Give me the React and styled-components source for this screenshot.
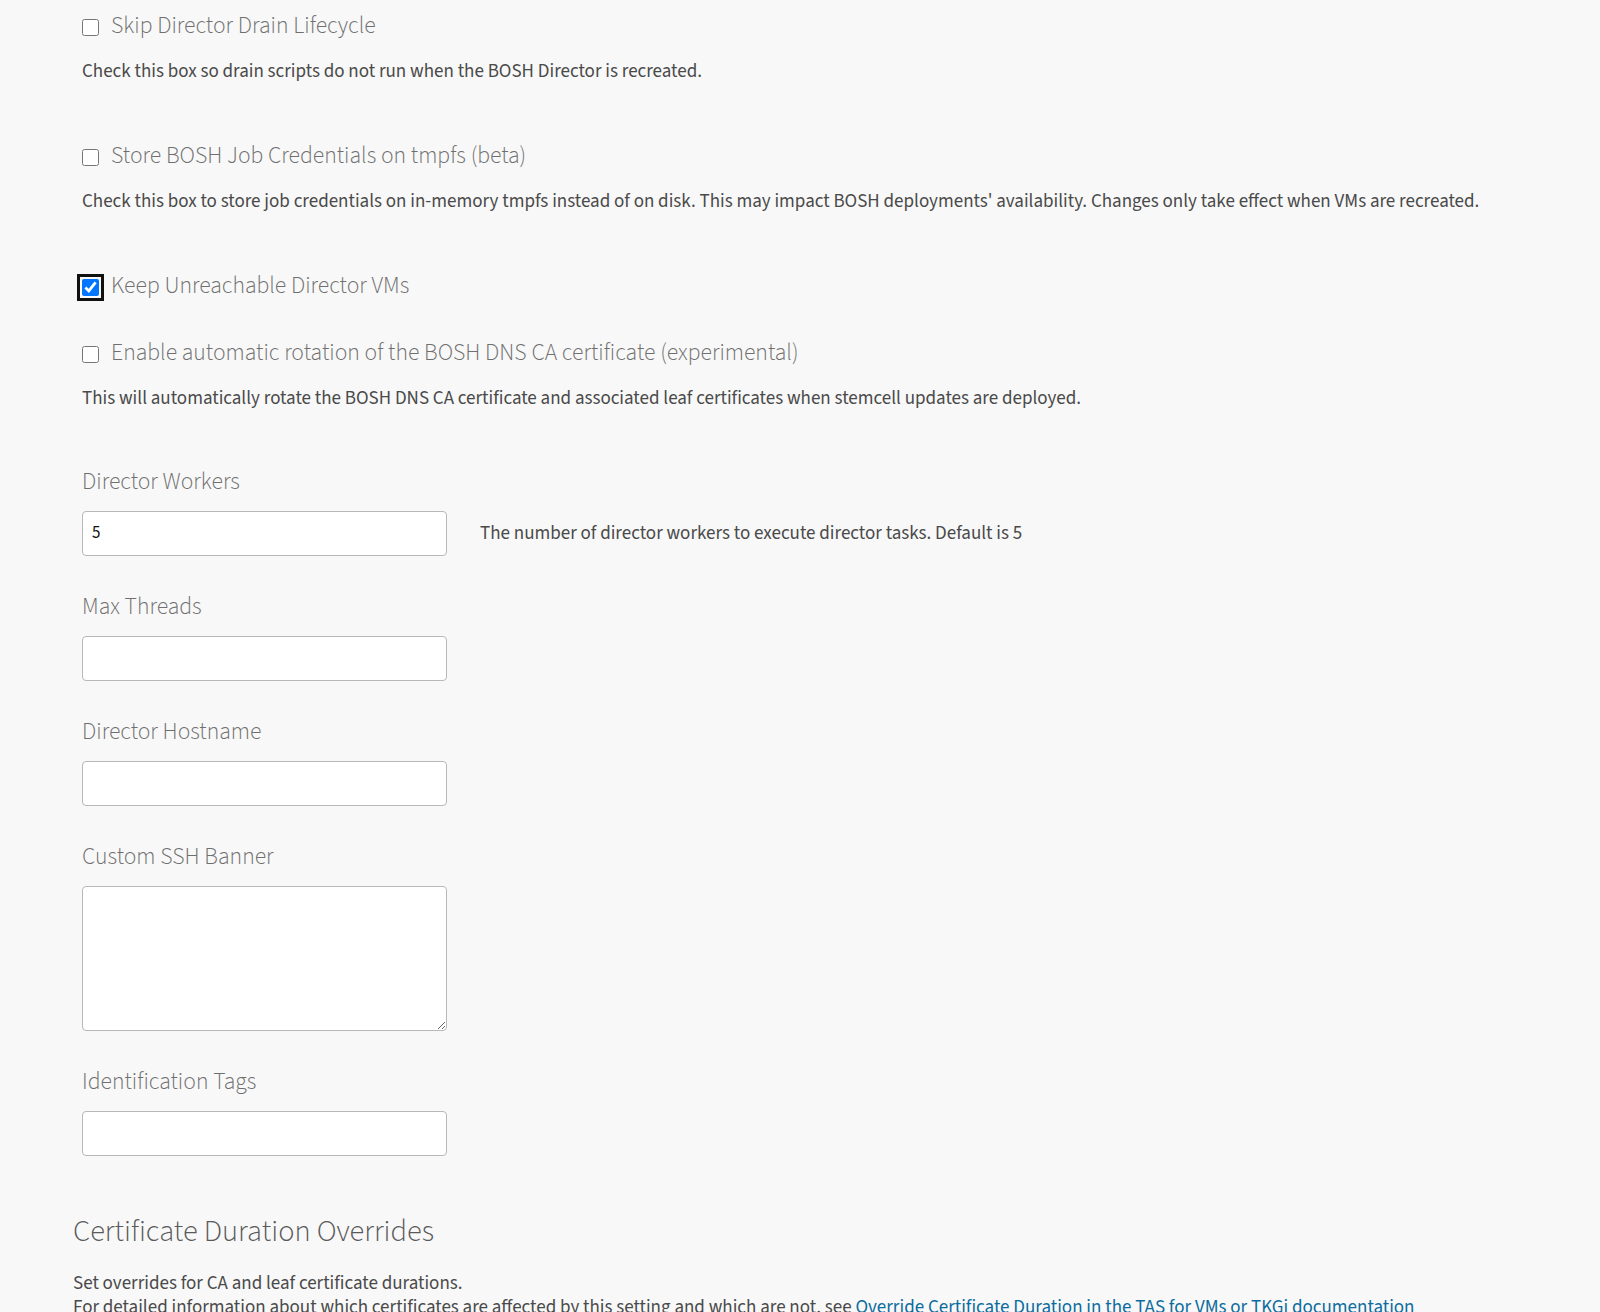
import React from "react";
import styled, { createGlobalStyle } from "styled-components";

const GlobalStyle = createGlobalStyle`
  html, body {
    margin: 0;
    background: #f8f8f8;
  }
  body {
    font-family: "Source Sans 3", "Open Sans", sans-serif;
    color: #444;
  }
`;

const Page = styled.main`
  display: flex;
  flex-direction: column;
  padding: 10px 0 0 73px;
`;

const Settings = styled.section`
  display: flex;
  flex-direction: column;
  padding-left: 9px;
`;

const CheckGroup = styled.div`
  display: flex;
  flex-direction: column;
  padding-bottom: 37px;
`;

const CheckLabel = styled.label`
  display: flex;
  align-items: center;
  height: 30px;
  font-size: 23.6px;
  font-weight: 300;
  color: #6f6f6f;
  white-space: nowrap;
`;

const Checkbox = styled.input.attrs({ type: "checkbox" })`
  width: 17px;
  height: 17px;
  margin: 4px 12px 0 0;
  border-radius: 3px;
  flex: none;

  &.focused {
    outline: 3px solid #111;
    outline-offset: 2px;
  }
`;

const Help = styled.p`
  margin: 20px 0 19px;
  font-size: 19px;
  line-height: 24px;
  color: #4a4a4a;
  white-space: nowrap;
`;

const FieldGroup = styled.div`
  display: flex;
  flex-direction: column;
  padding-bottom: 36.5px;
`;

const FieldLabel = styled.label`
  height: 30px;
  line-height: 30px;
  margin-bottom: 13.5px;
  font-size: 23.6px;
  font-weight: 300;
  color: #6f6f6f;
`;

const FieldRow = styled.div`
  display: flex;
  align-items: center;
  gap: 33px;
`;

const TextInput = styled.input`
  box-sizing: border-box;
  width: 365px;
  height: 45px;
  margin: 0;
  padding: 0 9px;
  background: #fff;
  border: 1px solid #b8b8b8;
  border-radius: 4px;
  font-family: "Source Sans 3", "Open Sans", sans-serif;
  font-size: 17px;
  color: #111;
  outline: none;
`;

const TextArea = styled.textarea`
  display: block;
  box-sizing: border-box;
  width: 365px;
  height: 145px;
  margin: 0;
  padding: 8px 9px;
  background: #fff;
  border: 1px solid #b8b8b8;
  border-radius: 4px;
  font-family: "Source Sans 3", "Open Sans", sans-serif;
  font-size: 17px;
  outline: none;
`;

const FieldHint = styled.span`
  font-size: 19px;
  color: #4a4a4a;
  white-space: nowrap;
`;

const SectionTitle = styled.h2`
  margin: 21px 0 21px;
  height: 38px;
  line-height: 38px;
  font-size: 30.4px;
  font-weight: 300;
  color: #5a5a5a;
`;

const Paragraph = styled.p`
  margin: 0;
  font-size: 19px;
  line-height: 23.5px;
  color: #4a4a4a;
  white-space: nowrap;
`;

const DocLink = styled.a`
  color: #0b6c9e;
  text-decoration: none;
`;

const checks = [
  {
    id: "skip-drain",
    label: "Skip Director Drain Lifecycle",
    help: "Check this box so drain scripts do not run when the BOSH Director is recreated.",
  },
  {
    id: "tmpfs",
    label: "Store BOSH Job Credentials on tmpfs (beta)",
    help: "Check this box to store job credentials on in-memory tmpfs instead of on disk. This may impact BOSH deployments' availability. Changes only take effect when VMs are recreated.",
  },
  {
    id: "keep-unreachable",
    label: "Keep Unreachable Director VMs",
    checked: true,
    focused: true,
  },
  {
    id: "dns-rotation",
    label: "Enable automatic rotation of the BOSH DNS CA certificate (experimental)",
    help: "This will automatically rotate the BOSH DNS CA certificate and associated leaf certificates when stemcell updates are deployed.",
  },
];

const fields = [
  {
    id: "director-workers",
    label: "Director Workers",
    value: "5",
    hint: "The number of director workers to execute director tasks. Default is 5",
  },
  { id: "max-threads", label: "Max Threads" },
  { id: "director-hostname", label: "Director Hostname" },
  { id: "ssh-banner", label: "Custom SSH Banner", multiline: true },
  { id: "identification-tags", label: "Identification Tags" },
];

export default function App() {
  return (
    <>
      <GlobalStyle />
      <Page>
        <Settings>
          {checks.map((c) => (
            <CheckGroup key={c.id}>
              <CheckLabel htmlFor={c.id}>
                <Checkbox
                  id={c.id}
                  defaultChecked={!!c.checked}
                  className={c.focused ? "focused" : undefined}
                />
                {c.label}
              </CheckLabel>
              {c.help && <Help>{c.help}</Help>}
            </CheckGroup>
          ))}

          {fields.map((f) => (
            <FieldGroup key={f.id}>
              <FieldLabel htmlFor={f.id}>{f.label}</FieldLabel>
              <FieldRow>
                {f.multiline ? (
                  <TextArea id={f.id} />
                ) : (
                  <TextInput id={f.id} type="text" defaultValue={f.value || ""} />
                )}
                {f.hint && <FieldHint>{f.hint}</FieldHint>}
              </FieldRow>
            </FieldGroup>
          ))}
        </Settings>

        <SectionTitle>Certificate Duration Overrides</SectionTitle>
        <Paragraph>Set overrides for CA and leaf certificate durations.</Paragraph>
        <Paragraph>
          For detailed information about which certificates are affected by this setting and which are not, see{" "}
          <DocLink href="#">Override Certificate Duration in the TAS for VMs or TKGi documentation</DocLink>
        </Paragraph>
      </Page>
    </>
  );
}
